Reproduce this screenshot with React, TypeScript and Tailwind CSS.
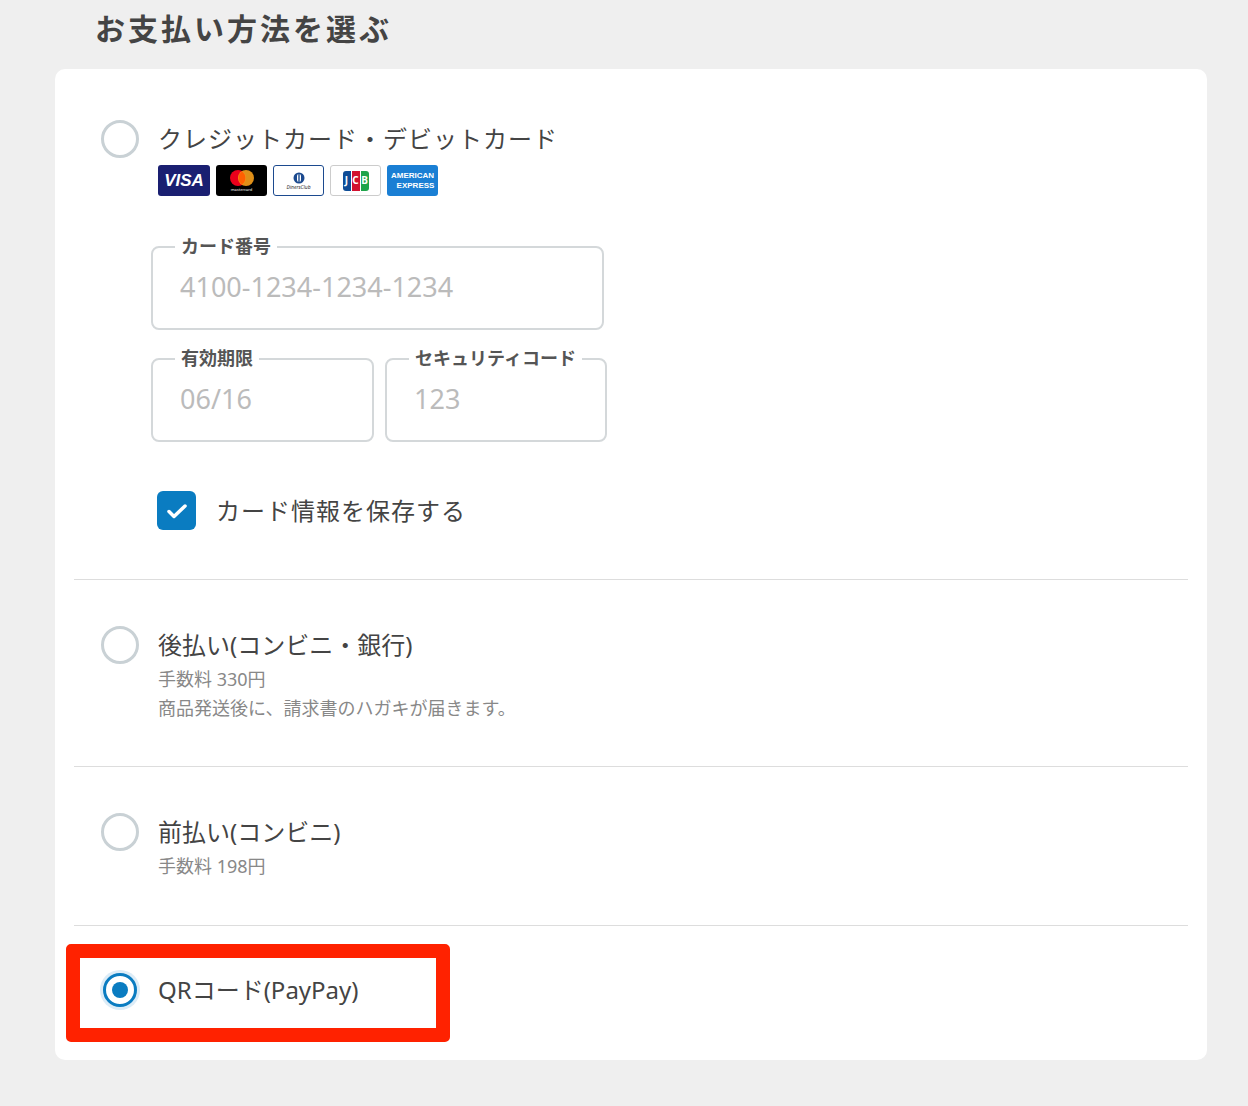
import React from "react";

const F = { fontFamily: '"Noto Sans","Noto Sans CJK JP",sans-serif' };

function Radio({ on = false }: { on?: boolean }) {
  return on ? (
    <div className="w-[40px] h-[40px] rounded-full bg-[#dcecf7] flex items-center justify-center shrink-0">
      <div className="w-[34px] h-[34px] rounded-full border-[3px] border-[#0a7cc1] bg-white flex items-center justify-center">
        <div className="w-[16px] h-[16px] rounded-full bg-[#0a7cc1]" />
      </div>
    </div>
  ) : (
    <div className="w-[40px] h-[40px] flex items-center justify-center shrink-0">
      <div className="w-[38px] h-[38px] rounded-full border-[3px] border-[#c9d1d5] bg-white" />
    </div>
  );
}

function Field({ label, ph, w }: { label: string; ph: string; w: string }) {
  return (
    <div className={`relative ${w} h-[84px] border-2 border-[#d4d8da] rounded-[8px] mt-[12px]`}>
      <span className="absolute -top-[14px] left-[22px] bg-white px-[6px] text-[18px] font-bold text-[#555] leading-[24px]">{label}</span>
      <div className="pl-[27px] pt-[22px] text-[27px] text-[#bbb] leading-[34px]">{ph}</div>
    </div>
  );
}

function Logos() {
  return (
    <div className="flex gap-[6px] mt-[6px]">
      <div className="w-[52px] h-[31px] rounded-[3px] bg-[#1a1f71] flex items-center justify-center text-white font-black italic text-[17px]" style={{ fontFamily: '"Liberation Sans",sans-serif' }}>VISA</div>
      <div className="w-[51px] h-[31px] rounded-[3px] bg-black flex flex-col items-center justify-center">
        <svg width="30" height="18" viewBox="0 0 30 18"><circle cx="11" cy="9" r="8" fill="#eb001b"/><circle cx="19" cy="9" r="8" fill="#f79e1b" opacity="0.9"/><path d="M15 2.5a8 8 0 0 1 0 13a8 8 0 0 1 0-13z" fill="#ff5f00"/></svg>
        <span className="text-white text-[4px] leading-[5px]">mastercard</span>
      </div>
      <div className="w-[51px] h-[31px] rounded-[3px] border border-[#1c4a8f] bg-white flex flex-col items-center justify-center">
        <svg width="16" height="12" viewBox="0 0 16 12"><circle cx="8" cy="6" r="5.5" fill="#1c4a8f"/><rect x="6" y="2" width="4" height="8" rx="2" fill="#fff"/><rect x="7.3" y="2" width="1.4" height="8" fill="#1c4a8f"/></svg>
        <span className="text-[#333] text-[5px] leading-[6px] italic">DinersClub</span>
      </div>
      <div className="w-[51px] h-[31px] rounded-[3px] border border-[#ccc] bg-white flex items-center justify-center">
        <div className="flex gap-[1px]">
          <div className="w-[8px] h-[20px] rounded-l-[3px] bg-[#0e4c96] text-white text-[10px] font-bold flex items-center justify-center">J</div>
          <div className="w-[8px] h-[20px] bg-[#d2112f] text-white text-[10px] font-bold flex items-center justify-center">C</div>
          <div className="w-[8px] h-[20px] rounded-r-[3px] bg-[#1ea44a] text-white text-[10px] font-bold flex items-center justify-center">B</div>
        </div>
      </div>
      <div className="w-[51px] h-[31px] rounded-[3px] bg-[#1a7fd4] flex flex-col items-center justify-center text-white text-[8px] font-bold leading-[10px]" style={{ fontFamily: '"Liberation Sans",sans-serif' }}>
        <span>AMERICAN</span><span className="pl-[6px]">EXPRESS</span>
      </div>
    </div>
  );
}

export default function App() {
  return (
    <div className="w-[1248px] h-[1106px] bg-[#efefef] relative overflow-hidden" style={F}>
      <h1 className="pl-[95px] pt-[8px] h-[69px] text-[30px] font-bold text-[#444] leading-[42px] tracking-[3px]">お支払い方法を選ぶ</h1>
      <div className="mx-[55px] w-[1152px] h-[991px] bg-white rounded-[10px] px-[19px]">
        <div className="pt-[50px] pl-[26px] h-[511px] border-b border-[#ddd]">
          <div className="flex gap-[18px]">
            <Radio />
            <div>
              <div className="text-[24px] text-[#444] leading-[40px] tracking-[1px]">クレジットカード・デビットカード</div>
              <Logos />
            </div>
          </div>
          <div className="pl-[51px] pt-[38px]">
            <Field label="カード番号" ph="4100-1234-1234-1234" w="w-[453px]" />
            <div className="flex gap-[11px] mt-[16px]">
              <Field label="有効期限" ph="06/16" w="w-[223px]" />
              <Field label="セキュリティコード" ph="123" w="w-[222px]" />
            </div>
            <div className="flex items-center gap-[20px] mt-[49px] pl-[6px]">
              <div className="w-[39px] h-[39px] rounded-[6px] bg-[#0a7cc1] flex items-center justify-center">
                <svg width="24" height="24" viewBox="0 0 24 24" fill="none" stroke="#fff" strokeWidth="3.5" strokeLinecap="round" strokeLinejoin="round"><path d="M4 12.5l5 5L20 7"/></svg>
              </div>
              <span className="text-[24px] text-[#444] tracking-[1px]">カード情報を保存する</span>
            </div>
          </div>
        </div>
        <div className="pt-[45px] pl-[26px] h-[187px] border-b border-[#ddd] flex gap-[18px]">
          <Radio />
          <div>
            <div className="text-[24px] text-[#444] leading-[40px]">後払い(コンビニ・銀行)</div>
            <div className="text-[18px] text-[#888] leading-[29px]">手数料 330円</div>
            <div className="text-[18px] text-[#888] leading-[29px]">商品発送後に、請求書のハガキが届きます。</div>
          </div>
        </div>
        <div className="pt-[45px] pl-[26px] h-[159px] border-b border-[#ddd] flex gap-[18px]">
          <Radio />
          <div>
            <div className="text-[24px] text-[#444] leading-[40px]">前払い(コンビニ)</div>
            <div className="text-[18px] text-[#888] leading-[29px]">手数料 198円</div>
          </div>
        </div>
        <div className="pt-[44px] pl-[26px] flex gap-[18px]">
          <Radio on />
          <div className="text-[24px] text-[#444] leading-[40px]">QRコード(PayPay)</div>
        </div>
      </div>
      <div className="absolute left-[66px] top-[944px] w-[384px] h-[98px] border-[14px] border-[#ff2200] rounded-[5px]" />
    </div>
  );
}
